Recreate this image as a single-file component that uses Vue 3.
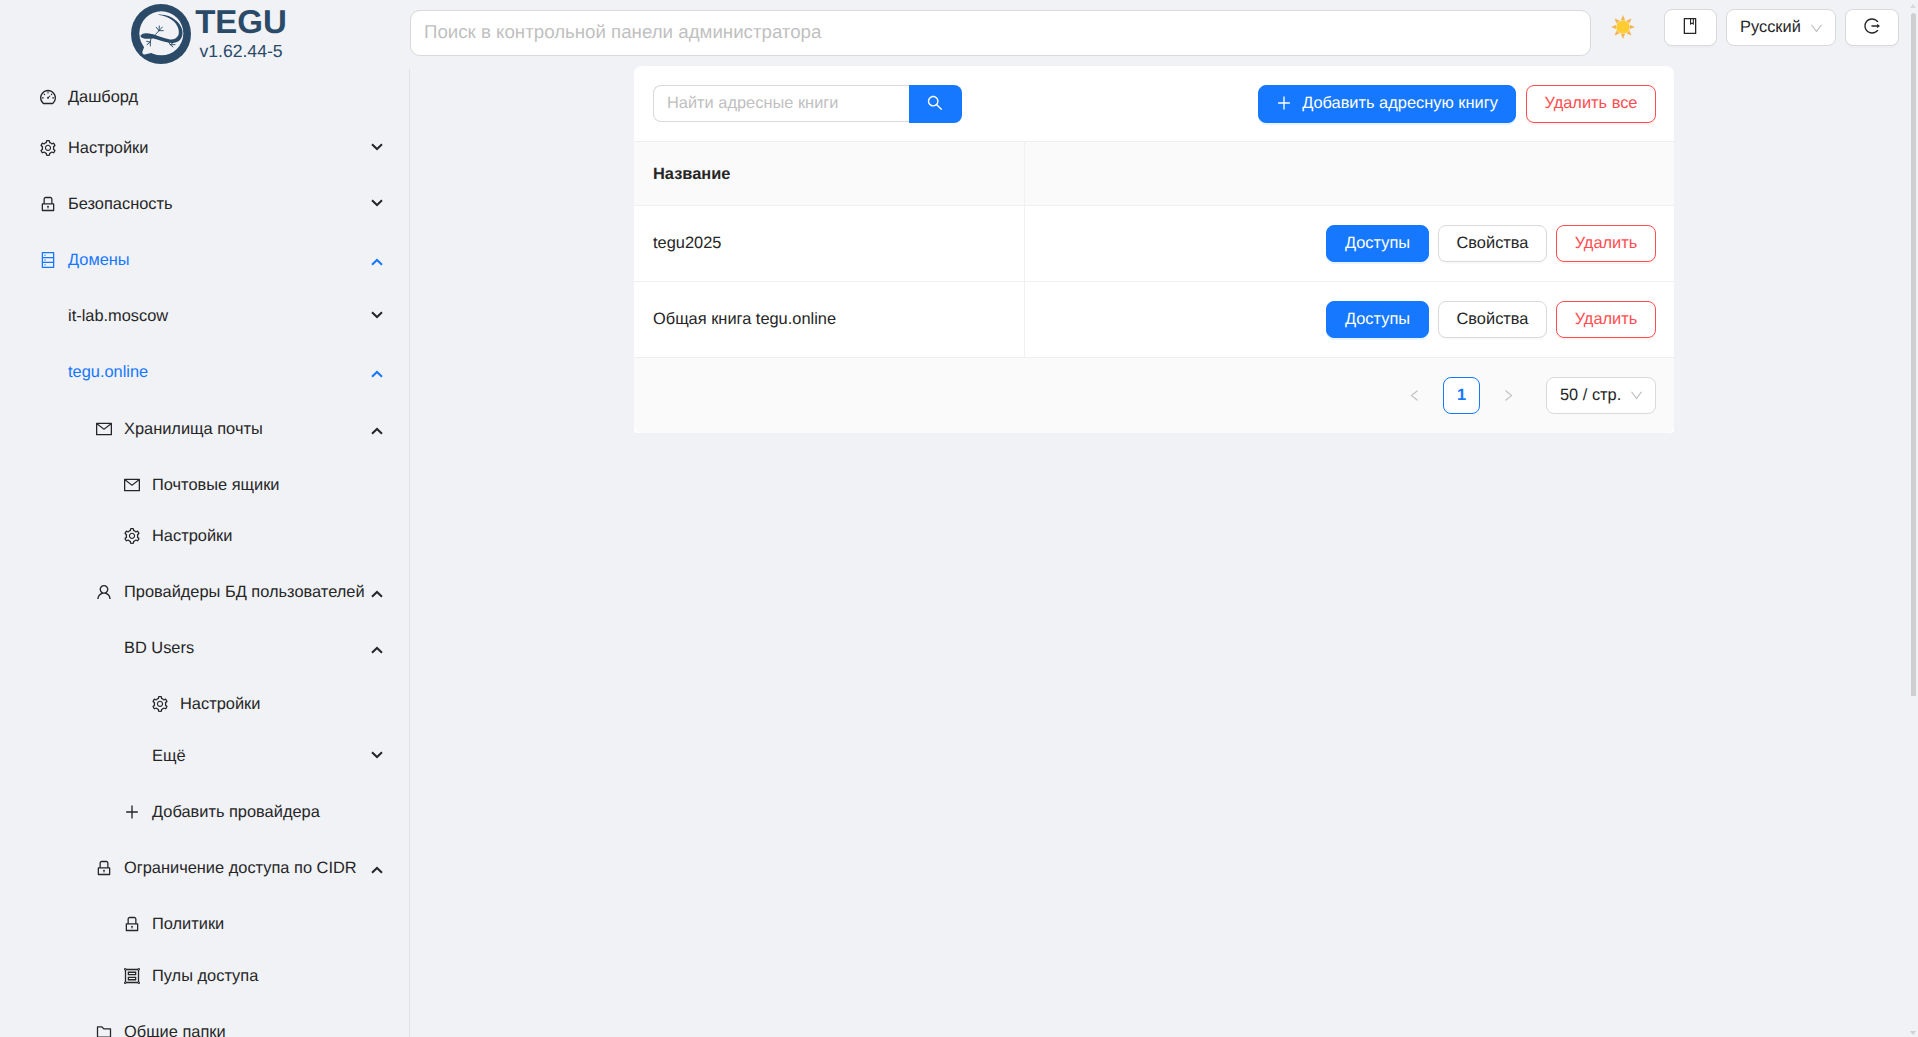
<script setup>
const P = {
  dash: ['M924.8 385.6a446.7 446.7 0 0 0-96-142.4 446.7 446.7 0 0 0-142.4-96C631.1 123.8 572.5 112 512 112s-119.1 11.8-174.4 35.2a446.7 446.7 0 0 0-142.4 96 446.7 446.7 0 0 0-96 142.4C75.8 440.9 64 499.5 64 560c0 132.7 58.3 257.7 159.9 343.1l1.7 1.4c5.8 4.8 13.1 7.5 20.6 7.5h531.7c7.5 0 14.8-2.7 20.6-7.5l1.7-1.4C901.7 817.7 960 692.7 960 560c0-60.5-11.9-119.1-35.2-174.4zM761.4 836H262.6A371.12 371.12 0 0 1 140 560c0-99.4 38.7-192.8 109-263 70.3-70.3 163.7-109 263-109 99.4 0 192.8 38.7 263 109 70.3 70.3 109 163.7 109 263 0 105.6-44.5 205.5-122.6 276zM623.5 421.5a8.03 8.03 0 0 0-11.3 0L527.7 506c-18.7-5-39.4-.2-54.1 14.5a55.95 55.95 0 0 0 0 79.2 55.95 55.95 0 0 0 79.2 0 55.87 55.87 0 0 0 14.5-54.1l84.5-84.5c3.1-3.1 3.1-8.2 0-11.3l-28.3-28.3zM490 320h44c4.4 0 8-3.6 8-8v-80c0-4.4-3.6-8-8-8h-44c-4.4 0-8 3.6-8 8v80c0 4.4 3.6 8 8 8zm260 218v44c0 4.4 3.6 8 8 8h80c4.4 0 8-3.6 8-8v-44c0-4.4-3.6-8-8-8h-80c-4.4 0-8 3.6-8 8zm12.7-197.2l-31.1-31.1a8.03 8.03 0 0 0-11.3 0l-56.6 56.6a8.03 8.03 0 0 0 0 11.3l31.1 31.1c3.1 3.1 8.2 3.1 11.3 0l56.6-56.6c3.1-3.1 3.1-8.2 0-11.3zm-458.6-31.1a8.03 8.03 0 0 0-11.3 0l-31.1 31.1a8.03 8.03 0 0 0 0 11.3l56.6 56.6c3.1 3.1 8.2 3.1 11.3 0l31.1-31.1c3.1-3.1 3.1-8.2 0-11.3l-56.6-56.6zM262 530h-80c-4.4 0-8 3.6-8 8v44c0 4.4 3.6 8 8 8h80c4.4 0 8-3.6 8-8v-44c0-4.4-3.6-8-8-8z'],
  gear: ['M924.8 625.7l-65.5-56c3.1-19 4.7-38.4 4.7-57.8s-1.6-38.8-4.7-57.8l65.5-56a32.03 32.03 0 0 0 9.3-35.2l-.9-2.6a443.74 443.74 0 0 0-79.7-137.9l-1.8-2.1a32.12 32.12 0 0 0-35.1-9.5l-81.3 28.9c-30-24.6-63.5-44-99.7-57.6l-15.7-85a32.05 32.05 0 0 0-25.8-25.7l-2.7-.5c-52.1-9.4-106.9-9.4-159 0l-2.7.5a32.05 32.05 0 0 0-25.8 25.7l-15.8 85.4a351.86 351.86 0 0 0-99 57.4l-81.9-29.1a32 32 0 0 0-35.1 9.5l-1.8 2.1a446.02 446.02 0 0 0-79.7 137.9l-.9 2.6c-4.5 12.5-.8 26.5 9.3 35.2l66.3 56.6c-3.1 18.8-4.6 38-4.6 57.1 0 19.2 1.5 38.4 4.6 57.1L99 625.5a32.03 32.03 0 0 0-9.3 35.2l.9 2.6c18.1 50.4 44.9 96.9 79.7 137.9l1.8 2.1a32.12 32.12 0 0 0 35.1 9.5l81.9-29.1c29.8 24.5 63.1 43.9 99 57.4l15.8 85.4a32.05 32.05 0 0 0 25.8 25.7l2.7.5a449.4 449.4 0 0 0 159 0l2.7-.5a32.05 32.05 0 0 0 25.8-25.7l15.7-85a350 350 0 0 0 99.7-57.6l81.3 28.9a32 32 0 0 0 35.1-9.5l1.8-2.1c34.8-41.1 61.6-87.5 79.7-137.9l.9-2.6c4.5-12.3.8-26.3-9.3-35zM788.3 465.9c2.5 15.1 3.8 30.6 3.8 46.1s-1.3 31-3.8 46.1l-6.6 40.1 74.7 63.9a370.03 370.03 0 0 1-42.6 73.6L721 702.8l-31.4 25.8c-23.9 19.6-50.5 35-79.3 45.8l-38.1 14.3-17.9 97a377.5 377.5 0 0 1-85 0l-17.9-97.2-37.8-14.5c-28.5-10.8-55-26.2-78.7-45.7l-31.4-25.9-93.4 33.2c-17-22.9-31.2-47.6-42.6-73.6l75.5-64.5-6.5-40c-2.4-14.9-3.7-30.3-3.7-45.5 0-15.3 1.2-30.6 3.7-45.5l6.5-40-75.5-64.5c11.3-26.1 25.6-50.7 42.6-73.6l93.4 33.2 31.4-25.9c23.7-19.5 50.2-34.9 78.7-45.7l37.9-14.3 17.9-97.2c28.1-3.2 56.8-3.2 85 0l17.9 97 38.1 14.3c28.7 10.8 55.4 26.2 79.3 45.8l31.4 25.8 92.8-32.9c17 22.9 31.2 47.6 42.6 73.6L781.8 426l6.5 39.9zM512 326c-97.2 0-176 78.8-176 176s78.8 176 176 176 176-78.8 176-176-78.8-176-176-176zm79.2 255.2A111.6 111.6 0 0 1 512 614c-29.9 0-58-11.7-79.2-32.8A111.6 111.6 0 0 1 400 502c0-29.9 11.7-58 32.8-79.2C454 401.6 482.1 390 512 390c29.9 0 58 11.6 79.2 32.8A111.6 111.6 0 0 1 624 502c0 29.9-11.7 58-32.8 79.2z'],
  lock: ['M832 464h-68V240c0-70.7-57.3-128-128-128H388c-70.7 0-128 57.3-128 128v224h-68c-17.7 0-32 14.3-32 32v384c0 17.7 14.3 32 32 32h640c17.7 0 32-14.3 32-32V496c0-17.7-14.3-32-32-32zM332 240c0-30.9 25.1-56 56-56h248c30.9 0 56 25.1 56 56v224H332V240zm460 600H232V536h560v304zM484 701v53c0 4.4 3.6 8 8 8h40c4.4 0 8-3.6 8-8v-53a48.01 48.01 0 1 0-56 0z'],
  mail: ['M928 160H96c-17.7 0-32 14.3-32 32v640c0 17.7 14.3 32 32 32h832c17.7 0 32-14.3 32-32V192c0-17.7-14.3-32-32-32zm-40 110.8V792H136V270.8l-27.6-21.5 39.3-50.5 42.8 33.3h643.1l42.8-33.3 39.3 50.5-27.7 21.5zM833.6 232L512 482 190.4 232l-42.8-33.3-39.3 50.5 27.6 21.5 341.6 265.6a55.99 55.99 0 0 0 68.7 0L888 270.8l27.6-21.5-39.3-50.5-42.7 33.2z'],
  user: ['M858.5 763.6a374 374 0 0 0-80.6-119.5 375.63 375.63 0 0 0-119.5-80.6c-.4-.2-.8-.3-1.2-.5C719.5 518 760 444.7 760 362c0-137-111-248-248-248S264 225 264 362c0 82.7 40.5 156 102.8 201.1-.4.2-.8.3-1.2.5-44.8 18.9-85 46-119.5 80.6a375.63 375.63 0 0 0-80.6 119.5A371.7 371.7 0 0 0 136 901.8a8 8 0 0 0 8 8.2h60c4.4 0 7.9-3.5 8-7.8 2-77.2 33-149.5 87.8-204.3 56.7-56.7 132-87.9 212.2-87.9s155.5 31.2 212.2 87.9C779 752.7 810 825 812 902.2c.1 4.4 3.6 7.8 8 7.8h60a8 8 0 0 0 8-8.2c-1-47.8-10.9-94.3-29.5-138.2zM512 534c-45.9 0-89.1-17.9-121.6-50.4S340 407.9 340 362c0-45.9 17.9-89.1 50.4-121.6S466.1 190 512 190s89.1 17.9 121.6 50.4S684 316.1 684 362c0 45.9-17.9 89.1-50.4 121.6S557.9 534 512 534z'],
  plus: ['M482 152h60q8 0 8 8v704q0 8-8 8h-60q-8 0-8-8V160q0-8 8-8z', 'M192 474h640q8 0 8 8v60q0 8-8 8H192q-8 0-8-8v-60q0-8 8-8z'],
  search: ['M909.6 854.5L649.9 594.8C690.2 542.7 712 479 712 412c0-80.2-31.3-155.4-87.9-212.1-56.6-56.7-132-87.9-212.1-87.9s-155.5 31.3-212.1 87.9C143.2 256.5 112 331.8 112 412c0 80.1 31.3 155.5 87.9 212.1C256.5 680.8 331.8 712 412 712c67 0 130.6-21.8 182.7-62l259.7 259.6a8.2 8.2 0 0 0 11.6 0l43.6-43.5a8.2 8.2 0 0 0 0-11.6zM570.4 570.4C528 612.7 471.8 636 412 636s-116-23.3-158.4-65.6C211.3 528 188 471.8 188 412s23.3-116.1 65.6-158.4C296 211.3 352.2 188 412 188s116.1 23.2 158.4 65.6S636 352.2 636 412s-23.3 116.1-65.6 158.4z'],
  down: ['M884 256h-75c-5.1 0-9.9 2.5-12.9 6.6L512 654.2 227.9 262.6c-3-4.1-7.8-6.6-12.9-6.6h-75c-6.5 0-10.3 7.4-6.5 12.7l352.6 486.1c12.8 17.6 39 17.6 51.7 0l352.6-486.1c3.9-5.3.1-12.7-6.4-12.7z'],
  left: ['M724 218.3V141c0-6.7-7.7-10.4-12.9-6.3L260.3 486.8a31.86 31.86 0 0 0 0 50.3l450.8 352.1c5.3 4.1 12.9.4 12.9-6.3v-77.3c0-4.9-2.3-9.6-6.1-12.6l-360-281 360-281.1c3.8-3 6.1-7.7 6.1-12.6z'],
  right: ['M765.7 486.8L314.9 134.7A7.97 7.97 0 0 0 302 141v77.3c0 4.9 2.3 9.6 6.1 12.6l360 281.1-360 281.1c-3.9 3-6.1 7.7-6.1 12.6V883c0 6.7 7.7 10.4 12.9 6.3l450.8-352.1a31.96 31.96 0 0 0 0-50.4z'],
  book: ['M832 64H192c-17.7 0-32 14.3-32 32v832c0 17.7 14.3 32 32 32h640c17.7 0 32-14.3 32-32V96c0-17.7-14.3-32-32-32zm-260 72h96v209.9L621.5 312 572 347.4V136zm220 752H232V136h280v296.9c0 3.3 1 6.6 3 9.3a15.9 15.9 0 0 0 22.3 3.7l83.8-59.9 81.4 59.4c2.7 2 6 3.1 9.4 3.1 8.8 0 16-7.2 16-16V136h64v752z'],
  logout: ['M868 732h-70.3c-4.8 0-9.3 2.1-12.3 5.8-7 8.5-14.5 16.7-22.4 24.5a353.84 353.84 0 0 1-112.7 75.9A352.8 352.8 0 0 1 512.4 866c-47.9 0-94.3-9.4-137.9-27.8a353.84 353.84 0 0 1-112.7-75.9 353.28 353.28 0 0 1-76-112.5C167.3 606.2 158 559.9 158 512s9.4-94.2 27.8-137.8c17.8-42.1 43.4-80 76-112.5s70.5-58.1 112.7-75.9c43.6-18.4 90-27.8 137.9-27.8 47.9 0 94.3 9.3 137.9 27.8 42.2 17.8 80.1 43.4 112.7 75.9 7.9 7.9 15.3 16.1 22.4 24.5 3 3.7 7.6 5.8 12.3 5.8H868c6.3 0 10.2-7 6.7-12.3C798 160.5 663.8 81.6 511.3 82 271.7 82.6 79.6 277.1 82 516.4 84.4 751.9 276.2 942 512.4 942c152.1 0 285.7-78.8 362.3-197.7 3.4-5.3-.4-12.3-6.7-12.3zm88.9-226.3L815 393.7c-5.3-4.2-13-.4-13 6.3v76H488c-4.4 0-8 3.6-8 8v56c0 4.4 3.6 8 8 8h314v76c0 6.7 7.8 10.5 13 6.3l141.9-112a8 8 0 0 0 0-12.6z'],
  db: ['M832 64H192c-17.7 0-32 14.3-32 32v832c0 17.7 14.3 32 32 32h640c17.7 0 32-14.3 32-32V96c0-17.7-14.3-32-32-32zm-600 72h560v208H232V136zm560 480H232V408h560v208zm0 272H232V680h560v208zM304 240a40 40 0 1 0 80 0 40 40 0 1 0-80 0zm0 272a40 40 0 1 0 80 0 40 40 0 1 0-80 0zm0 272a40 40 0 1 0 80 0 40 40 0 1 0-80 0z'],
  folder: ['M880 298.4H521L403.7 186.2a8.15 8.15 0 0 0-5.5-2.2H144c-17.7 0-32 14.3-32 32v592c0 17.7 14.3 32 32 32h736c17.7 0 32-14.3 32-32V330.4c0-17.7-14.3-32-32-32zM840 768H184V256h188.5l119.6 114.4H840V768z'],
  group: ['M912 820.1V203.9c28-9.9 48-36.6 48-67.9 0-39.8-32.2-72-72-72-31.3 0-58 20-67.9 48H203.9C194 84 167.3 64 136 64c-39.8 0-72 32.2-72 72 0 31.3 20 58 48 67.9v616.2C84 830 64 856.7 64 888c0 39.8 32.2 72 72 72 31.3 0 58-20 67.9-48h616.2c9.9 28 36.6 48 67.9 48 39.8 0 72-32.2 72-72 0-31.3-20-58-48-67.9zM888 112c13.3 0 24 10.7 24 24s-10.7 24-24 24-24-10.7-24-24 10.7-24 24-24zM136 912c-13.3 0-24-10.7-24-24s10.7-24 24-24 24 10.7 24 24-10.7 24-24 24zm0-752c-13.3 0-24-10.7-24-24s10.7-24 24-24 24 10.7 24 24-10.7 24-24 24zm704 680H184V184h656v656zm48 72c-13.3 0-24-10.7-24-24s10.7-24 24-24 24 10.7 24 24-10.7 24-24 24z', 'M288 474h448c8.8 0 16-7.2 16-16V282c0-8.8-7.2-16-16-16H288c-8.8 0-16 7.2-16 16v176c0 8.8 7.2 16 16 16zm56-136h336v64H344v-64zm-56 420h448c8.8 0 16-7.2 16-16V566c0-8.8-7.2-16-16-16H288c-8.8 0-16 7.2-16 16v176c0 8.8 7.2 16 16 16zm56-136h336v64H344v-64z'],
}

const menu = [
  { t: 'Дашборд', i: 'dash', l: 0, h: 51 },
  { t: 'Настройки', i: 'gear', l: 0, h: 56, c: 'down' },
  { t: 'Безопасность', i: 'lock', l: 0, h: 56, c: 'down' },
  { t: 'Домены', i: 'db', l: 0, h: 56, c: 'up', a: true },
  { t: 'it-lab.moscow', l: 0, h: 56, c: 'down' },
  { t: 'tegu.online', l: 0, h: 57, c: 'up', a: true },
  { t: 'Хранилища почты', i: 'mail', l: 1, h: 56, c: 'up' },
  { t: 'Почтовые ящики', i: 'mail', l: 2, h: 51 },
  { t: 'Настройки', i: 'gear', l: 2, h: 56 },
  { t: 'Провайдеры БД пользователей', i: 'user', l: 1, h: 56, c: 'up' },
  { t: 'BD Users', l: 1, h: 56, c: 'up' },
  { t: 'Настройки', i: 'gear', l: 3, h: 52 },
  { t: 'Ещё', l: 2, h: 56, c: 'down' },
  { t: 'Добавить провайдера', i: 'plus', l: 2, h: 56 },
  { t: 'Ограничение доступа по CIDR', i: 'lock', l: 1, h: 56, c: 'up' },
  { t: 'Политики', i: 'lock', l: 2, h: 52 },
  { t: 'Пулы доступа', i: 'group', l: 2, h: 56 },
  { t: 'Общие папки', i: 'folder', l: 1, h: 56 },
]
const rows = ['tegu2025', 'Общая книга tegu.online']
</script>

<template>
  <div class="page">
    <header class="top">
      <div class="brand">
        <svg class="logo" viewBox="32 12 180 180" aria-hidden="true">
          <circle cx="122" cy="102" r="90" fill="#2a4a68" />
          <circle cx="123" cy="100" r="66" fill="#f0f2f6" />
          <path d="M76 128L66 156Q66 166 76 163L106 156z" fill="#f0f2f6" />
          <path d="M60 108C64 102 70 100 76 100C82 99 88 101 93 102C106 104 122 112 146 118C158 120 169 116 174 106C179 92 172 74 158 62C146 52 130 46 112 44C132 42 152 48 168 62C184 76 191 96 184 112C178 126 164 131 148 128C132 125 116 120 102 116C92 114 82 118 74 116C66 115 62 113 60 108z" fill="#2a4a68" />
          <path d="M106 103L116 92M116 92L108 82M116 92L117 78M116 92L126 81M116 92L129 92M92 114L90 126M90 126L79 124M90 126L80 134M90 126L90 138M142 122L150 134M150 134L161 126M150 134L164 134M150 134L158 141" stroke="#2a4a68" stroke-width="2.8" fill="none" stroke-linecap="round" />
        </svg>
        <div class="brand-text">
          <div class="brand-name">TEGU</div>
          <div class="brand-ver">v1.62.44-5</div>
        </div>
      </div>
      <input class="global-search" placeholder="Поиск в контрольной панели администратора" />
      <svg class="sun" viewBox="0 0 24 24" aria-hidden="true">
        <g fill="#f4b455">
          <path d="M12 0l2 5h-4z" /><path d="M12 24l2-5h-4z" /><path d="M0 12l5-2v4z" /><path d="M24 12l-5-2v4z" />
          <path d="M3.5 3.5l5 2-3 3z" /><path d="M20.5 3.5l-5 2 3 3z" /><path d="M3.5 20.5l5-2-3-3z" /><path d="M20.5 20.5l-5-2 3-3z" />
        </g>
        <circle cx="12" cy="12" r="6.8" fill="#ffcc33" />
      </svg>
      <button class="btn tool tool-book"><svg class="ic" viewBox="64 64 896 896"><path v-for="d in P.book" :key="d" :d="d" /></svg></button>
      <div class="select lang">
        <span>Русский</span>
        <svg class="caret" viewBox="64 64 896 896"><path v-for="d in P.down" :key="d" :d="d" /></svg>
      </div>
      <button class="btn tool tool-out"><svg class="ic" viewBox="64 64 896 896"><path v-for="d in P.logout" :key="d" :d="d" /></svg></button>
    </header>

    <div class="body">
      <nav class="side">
        <div
          v-for="(m, idx) in menu"
          :key="idx"
          class="item"
          :class="['lvl-' + m.l, { active: m.a }]"
          :style="{ height: m.h + 'px' }"
        >
          <div class="item-in">
            <span class="item-icon">
              <svg v-if="m.i" viewBox="64 64 896 896"><path v-for="d in P[m.i]" :key="d" :d="d" /></svg>
            </span>
            <span class="item-text">{{ m.t }}</span>
            <svg v-if="m.c" class="chev" :class="m.c" viewBox="0 0 12 8"><polyline points="1,1.2 6,6 11,1.2" /></svg>
          </div>
        </div>
      </nav>

      <main class="main">
        <section class="card">
          <div class="toolbar">
            <div class="find">
              <input class="find-input" placeholder="Найти адресные книги" />
              <button class="find-btn"><svg viewBox="64 64 896 896"><path v-for="d in P.search" :key="d" :d="d" /></svg></button>
            </div>
            <div class="toolbar-actions">
              <button class="btn primary add"><svg class="ic" viewBox="64 64 896 896"><path v-for="d in P.plus" :key="d" :d="d" /></svg>Добавить адресную книгу</button>
              <button class="btn danger del-all">Удалить все</button>
            </div>
          </div>
          <div class="thead">
            <div class="cell name">Название</div>
            <div class="cell"></div>
          </div>
          <div v-for="r in rows" :key="r" class="row">
            <div class="cell">{{ r }}</div>
            <div class="cell actions">
              <button class="btn primary act-a">Доступы</button>
              <button class="btn act-b">Свойства</button>
              <button class="btn danger act-c">Удалить</button>
            </div>
          </div>
          <div class="pager">
            <svg class="pg-arrow" viewBox="64 64 896 896"><path v-for="d in P.left" :key="d" :d="d" /></svg>
            <span class="pg-num">1</span>
            <svg class="pg-arrow" viewBox="64 64 896 896"><path v-for="d in P.right" :key="d" :d="d" /></svg>
            <div class="select size">
              <span>50 / стр.</span>
              <svg class="caret" viewBox="64 64 896 896"><path v-for="d in P.down" :key="d" :d="d" /></svg>
            </div>
          </div>
        </section>
      </main>
    </div>

    <div class="scrollbar"><i class="sb-arrow"></i><i class="sb-thumb"></i><i class="sb-arrow-d"></i></div>
  </div>
</template>

<style>
html, body { margin: 0; overflow: hidden; background: #f0f2f6; }
</style>

<style scoped>
.page {
  position: relative;
  width: 1918px;
  height: 1037px;
  overflow: hidden;
  background: #f0f2f6;
  color: #262626;
  font: 16.4px/24px "Liberation Sans", Arial, sans-serif;
  text-rendering: geometricPrecision;
}
svg { fill: currentColor; display: block; }
input, button { text-rendering: geometricPrecision; }

.top { display: flex; align-items: flex-start; height: 66px; box-sizing: border-box; }
.brand { width: 410px; flex: none; display: flex; align-items: flex-start; padding: 4px 0 0 131px; box-sizing: border-box; }
.logo { width: 60px; height: 60px; flex: none; }
.brand-text { margin-left: 4px; width: 92px; text-align: center; color: #2a4a68; }
.brand-name { font-size: 33px; line-height: 36px; font-weight: 700; }
.brand-ver { font-size: 17.6px; line-height: 22px; }

.global-search {
  width: 1181px; height: 46px; margin-top: 9.5px; box-sizing: border-box;
  border: 1px solid #d9d9d9; border-radius: 10px; background: #fff;
  padding: 0 13px 2px; font: 18.7px "Liberation Sans", Arial, sans-serif; outline: none;
}
.global-search::placeholder, .find-input::placeholder { color: #bfbfbf; opacity: 1; }
.sun { width: 24px; height: 24px; margin: 15px 0 0 20px; flex: none; }

.btn {
  box-sizing: border-box; height: 37px; padding: 0; border: 1px solid #d9d9d9; border-radius: 8px;
  background: #fff; color: #262626; font: 16.4px "Liberation Sans", Arial, sans-serif;
  display: inline-flex; align-items: center; justify-content: center;
  box-shadow: 0 2px 0 rgba(0,0,0,.02);
}
.btn.primary { background: #1677ff; border-color: #1677ff; color: #fff; box-shadow: 0 2px 0 rgba(5,145,255,.1); }
.btn.danger { color: #ff4d4f; border-color: #ff4d4f; box-shadow: 0 2px 0 rgba(255,38,5,.06); }
.ic { width: 16px; height: 16px; flex: none; }

.tool { margin-top: 9px; }
.tool .ic { margin-top: -3px; }
.tool-book { width: 53px; margin-left: 29px; }
.tool-book .ic { margin-right: 1px; }
.tool-out { width: 54px; margin-left: 9px; }

.select {
  box-sizing: border-box; height: 37px; border: 1px solid #d9d9d9; border-radius: 8px; background: #fff;
  display: flex; align-items: center; justify-content: space-between; padding: 0 12px 0 13px;
}
.lang { width: 110px; margin: 9px 0 0 9px; padding-bottom: 2px; }
.caret { width: 13px; height: 13px; color: #bfbfbf; flex: none; }
.lang .caret { margin-top: 3px; }

.body { display: flex; height: 971px; }
.side {
  width: 410px; flex: none; box-sizing: border-box; margin-top: 3px; padding-top: 8px;
  border-right: 1px solid #dfe1e5; overflow: hidden;
}
.item { display: block; box-sizing: border-box; padding-right: 26px; }
.item-in { display: flex; align-items: center; height: 40px; }
.lvl-0 { padding-left: 40px; }
.lvl-1 { padding-left: 96px; }
.lvl-2 { padding-left: 124px; }
.lvl-3 { padding-left: 152px; }
.item-icon { width: 16px; height: 16px; margin-right: 12px; flex: none; }
.item-icon svg { width: 16px; height: 16px; }
.item-text { flex: 1; white-space: nowrap; }
.active { color: #1677ff; }
.chev { width: 12px; height: 8px; flex: none; fill: none; stroke: currentColor; stroke-width: 2; }
.chev.down { transform: translateY(-1px); }
.chev.up { transform: translateY(2px) scaleY(-1); }

.main { flex: 1; padding-left: 224px; }
.card { width: 1040px; background: #fff; border-radius: 8px 8px 3px 3px; }
.toolbar { display: flex; justify-content: space-between; height: 75px; box-sizing: border-box; padding: 19px 18px 0 19px; }
.find { display: flex; height: 38px; }
.find-input {
  width: 256px; height: 37px; box-sizing: border-box; border: 1px solid #d9d9d9; border-right: 0;
  border-radius: 8px 0 0 8px; padding: 0 13px; font: 16.4px "Liberation Sans", Arial, sans-serif; outline: none;
}
.find-btn {
  width: 53px; height: 38px; border: 0; padding: 0; background: #1677ff; color: #fff;
  border-radius: 0 8px 8px 0; display: flex; align-items: center; justify-content: center;
}
.find-btn svg { width: 16px; height: 16px; margin: -3px 1px 0 0; }
.toolbar-actions { display: flex; gap: 10px; }
.add { width: 258px; height: 38px; gap: 10px; padding-bottom: 2px; }
.del-all { width: 130px; height: 38px; padding-bottom: 2px; }

.thead, .row { display: grid; grid-template-columns: 391px 1fr; border-top: 1px solid #f0f0f0; }
.thead { background: #fafafa; height: 64px; box-sizing: border-box; }
.row { height: 76px; box-sizing: border-box; }
.cell { display: flex; align-items: center; padding: 0 18px 0 19px; min-width: 0; }
.cell:first-child { border-right: 1px solid #f0f0f0; }
.row .cell:first-child { padding-bottom: 2px; }
.name { font-weight: 700; }
.actions { justify-content: flex-end; gap: 9px; }
.act-a { width: 103px; }
.act-b { width: 109px; }
.act-c { width: 100px; }

.pager {
  display: flex; align-items: center; justify-content: flex-end; height: 76px; box-sizing: border-box;
  padding: 0 18px 1px 0; background: #fafafa; border-top: 1px solid #f0f0f0; border-radius: 0 0 8px 8px;
}
.pg-arrow { width: 13px; height: 13px; color: #bfbfbf; flex: none; }
.pg-num {
  width: 37px; height: 37px; box-sizing: border-box; border: 1px solid #1677ff; border-radius: 8px; background: #fff;
  color: #1677ff; font-weight: 700; display: flex; align-items: center; justify-content: center; margin: 0 22px;
}
.size { width: 110px; margin-left: 31px; }

.scrollbar { position: absolute; top: 0; right: 0; width: 8px; height: 1037px; background: #f0f2f6; }
.sb-arrow, .sb-arrow-d {
  position: absolute; left: 0; width: 0; height: 0;
  border-left: 3px solid transparent; border-right: 3px solid transparent;
}
.sb-arrow { top: 4px; border-bottom: 4px solid #d8d8d8; }
.sb-arrow-d { bottom: 2px; border-top: 4px solid #d0d0d0; }
.sb-thumb { position: absolute; left: 1px; top: 13px; width: 5px; height: 683px; background: #cfcfcf; border-radius: 3px 3px 0 0; }
</style>
